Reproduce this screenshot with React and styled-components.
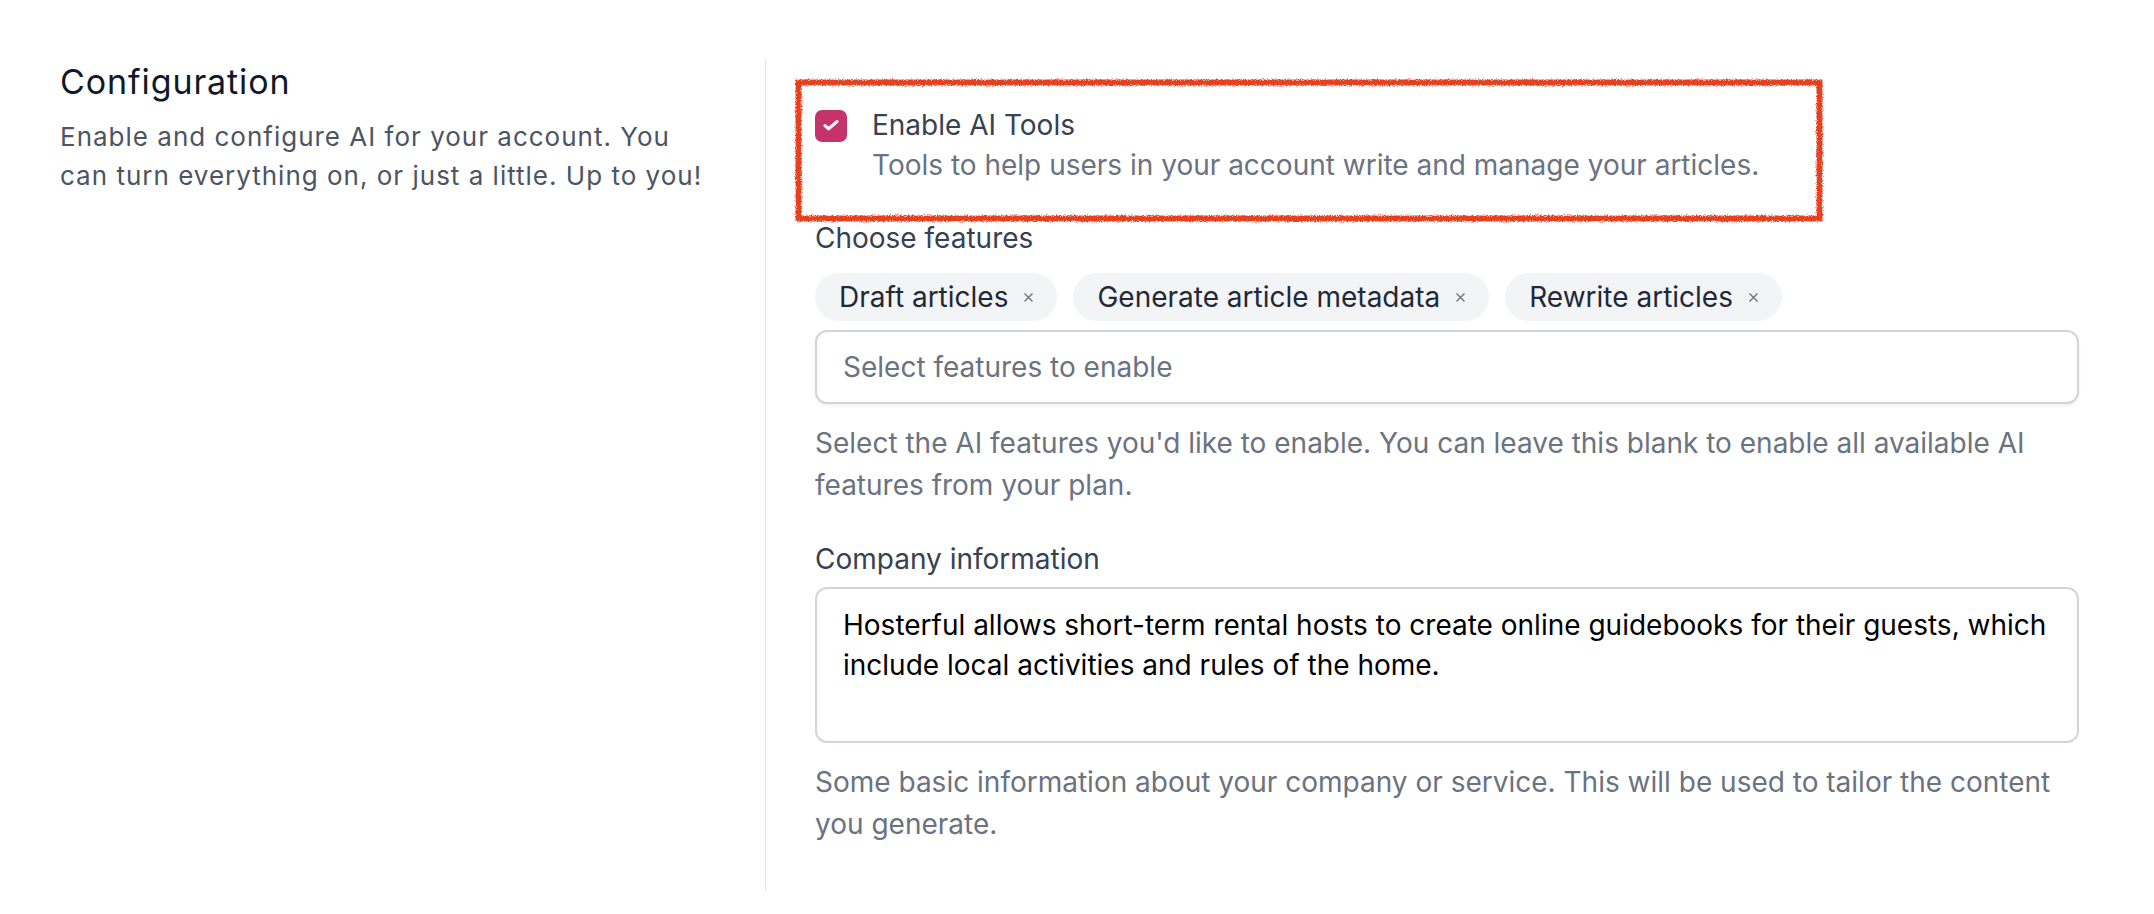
import React from 'react'
import styled, { createGlobalStyle } from 'styled-components'

const GlobalStyle = createGlobalStyle`
  html, body {
    margin: 0;
    padding: 0;
    background: #ffffff;
  }
  body {
    font-family: Inter, 'Noto Sans', 'Liberation Sans', sans-serif;
    -webkit-font-smoothing: antialiased;
  }
  * {
    box-sizing: border-box;
  }
`

const features = ['Draft articles', 'Generate article metadata', 'Rewrite articles']

const App = () => {
  return (
    <>
      <GlobalStyle />
      <Page>
        <Intro>
          <Title>Configuration</Title>
          <IntroText>
            Enable and configure AI for your account. You can turn everything on, or just a
            little. Up to you!
          </IntroText>
        </Intro>

        <Settings>
          <CheckRow>
            <Box aria-checked='true' role='checkbox'>
              <svg width='32' height='32' viewBox='0 0 32 32' fill='none'>
                <path
                  d='M10 15.6 13.6 18.8 22 11.6'
                  stroke='#fff'
                  strokeWidth='3.2'
                  strokeLinecap='round'
                  strokeLinejoin='round'
                />
              </svg>
            </Box>
            <div>
              <Label>Enable AI Tools</Label>
              <Hint>Tools to help users in your account write and manage your articles.</Hint>
            </div>
            <Scribble viewBox='0 0 1028 143' preserveAspectRatio='none'>
              <defs>
                <filter id='rough' x='-2%' y='-5%' width='104%' height='110%'>
                  <feTurbulence type='fractalNoise' baseFrequency='1.2' numOctaves='2' seed='3' />
                  <feDisplacementMap in='SourceGraphic' scale='4' />
                </filter>
              </defs>
              <rect
                x='3.5'
                y='3.5'
                width='1021'
                height='136'
                fill='none'
                stroke='#e8401e'
                strokeWidth='6'
                filter='url(#rough)'
              />
            </Scribble>
          </CheckRow>

          <Field>
            <Label>Choose features</Label>
            <Chips>
              {features.map((f) => (
                <Chip key={f}>
                  {f}
                  <svg width='11' height='11' viewBox='0 0 11 11' fill='none'>
                    <path d='M1.5 1.5 9.5 9.5M9.5 1.5 1.5 9.5' stroke='#6b7280' strokeWidth='1.4' />
                  </svg>
                </Chip>
              ))}
            </Chips>
            <Input placeholder='Select features to enable' />
            <Help>
              Select the AI features you'd like to enable. You can leave this blank to enable all
              available AI features from your plan.
            </Help>
          </Field>

          <Field $gap>
            <Label>Company information</Label>
            <TextArea
              rows={3}
              defaultValue='Hosterful allows short-term rental hosts to create online guidebooks for their guests, which include local activities and rules of the home.'
            />
            <Help>
              Some basic information about your company or service. This will be used to tailor
              the content you generate.
            </Help>
          </Field>
        </Settings>
      </Page>
    </>
  )
}

const Page = styled.main`
  display: grid;
  grid-template-columns: 705px 1314px;
  padding: 58px 0 0 60px;
  align-items: start;
`

const Intro = styled.section`
  padding-top: 4px;
`

const Title = styled.h2`
  margin: 0;
  font-size: 34px;
  line-height: 40px;
  font-weight: 400;
  letter-spacing: 0.9px;
  color: #111827;
`

const IntroText = styled.p`
  margin: 15px 0 0;
  max-width: 655px;
  font-size: 26px;
  line-height: 39px;
  letter-spacing: 1px;
  color: #4b5563;
`

const Settings = styled.section`
  border-left: 1px solid #e5e7eb;
  padding: 47px 0 46px 49px;
  display: flex;
  flex-direction: column;
`

const CheckRow = styled.div`
  position: relative;
  display: grid;
  grid-template-columns: 32px 1fr;
  column-gap: 25px;
  align-items: start;
`

const Box = styled.span`
  margin-top: 4.5px;
  width: 32px;
  height: 32px;
  border-radius: 7px;
  background: #c6336b;
  display: flex;
  align-items: center;
  justify-content: center;
`

const Scribble = styled.svg`
  position: absolute;
  left: -20px;
  top: -26px;
  width: 1028px;
  height: 143px;
  pointer-events: none;
  overflow: visible;
`

const Label = styled.div`
  font-size: 28px;
  line-height: 40px;
  color: #374151;
`

const Hint = styled.div`
  font-size: 28px;
  line-height: 40px;
  color: #6b7280;
`

const Field = styled.div`
  margin-top: ${(p) => (p.$gap ? '32.5px' : '33px')};
  display: flex;
  flex-direction: column;
`

const Chips = styled.div`
  display: flex;
  gap: 16px;
  margin-top: 15px;
`

const Chip = styled.span`
  height: 48px;
  padding: 0 23px 0 24px;
  border-radius: 24px;
  background: #f3f4f6;
  display: inline-flex;
  align-items: center;
  gap: 15px;
  font-size: 28px;
  color: #1f2937;
`

const Input = styled.input`
  margin-top: 9px;
  height: 74px;
  width: 100%;
  padding: 0 26px;
  border: 2px solid #d1d5db;
  border-radius: 12px;
  box-shadow: 0 2px 3px rgba(0, 0, 0, 0.06);
  font-family: inherit;
  font-size: 28px;
  color: #111827;
  outline: none;
  &::placeholder {
    color: #6b7280;
  }
`

const TextArea = styled.textarea`
  margin-top: 8px;
  width: 100%;
  height: 156px;
  padding: 16px 26px;
  border: 2px solid #d1d5db;
  border-radius: 12px;
  resize: none;
  font-family: inherit;
  font-size: 28px;
  line-height: 40px;
  color: #000000;
  outline: none;
`

const Help = styled.p`
  margin: 18px 0 0;
  font-size: 28px;
  line-height: 42px;
  color: #6b7280;
`

export default App
